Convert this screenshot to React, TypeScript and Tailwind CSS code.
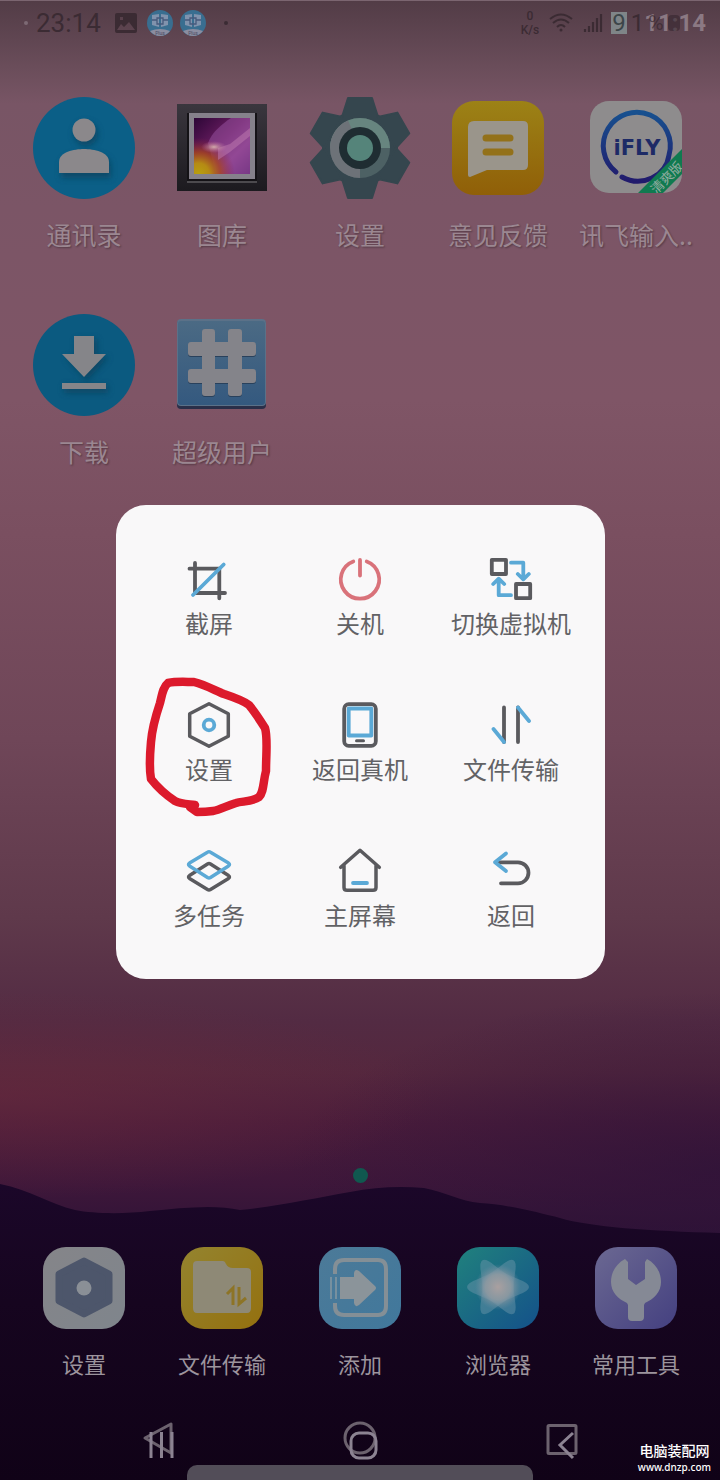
import type { ReactNode } from "react";

const INK = "#5a5a5e";
const BLUE = "#5ba9d6";

type Item = { label: string; icon: ReactNode };

const ContactsIcon = () => (
  <svg viewBox="-52 -52 104 104" className="size-[104px]" aria-hidden="true">
    <defs>
      <filter id="soft" x="-40%" y="-40%" width="180%" height="180%">
        <feGaussianBlur stdDeviation="3" />
      </filter>
    </defs>
    <circle r="51" fill="#0b5f87" />
    <g fill="#073f5a" opacity=".7" filter="url(#soft)">
      <circle cx="2" cy="-14" r="12" />
      <path d="M-23 30V18C-23 8-8 5 2 5S27 8 27 18V30Z" />
    </g>
    <circle cy="-18" r="11.5" fill="#8b888b" />
    <path d="M-25 25V14C-25 4-10 1 0 1S25 4 25 14V25Z" fill="#8b888b" />
  </svg>
);

const GalleryIcon = () => (
  <svg viewBox="-52 -52 104 104" className="size-[104px]" aria-hidden="true">
    <defs>
      <linearGradient id="frame" x1="0" y1="0" x2="0" y2="1">
        <stop offset="0" stopColor="#3a363e" />
        <stop offset="1" stopColor="#1c1a1f" />
      </linearGradient>
      <linearGradient id="photo" x1="0" y1="0" x2="1" y2="1">
        <stop offset="0" stopColor="#2c0636" />
        <stop offset=".45" stopColor="#6b1d62" />
        <stop offset=".7" stopColor="#8a3a86" />
        <stop offset="1" stopColor="#571a68" />
      </linearGradient>
      <radialGradient id="flare" cx="8%" cy="100%" r="65%">
        <stop offset="0" stopColor="#b8a00e" />
        <stop offset=".3" stopColor="#b58a14" />
        <stop offset=".6" stopColor="#a8461e" stopOpacity=".8" />
        <stop offset="1" stopColor="#8a2048" stopOpacity="0" />
      </radialGradient>
      <radialGradient id="spark">
        <stop offset="0" stopColor="#d9b7b0" stopOpacity=".9" />
        <stop offset="1" stopColor="#c070a0" stopOpacity="0" />
      </radialGradient>
    </defs>
    <rect x="-45" y="-44" width="90" height="87" fill="url(#frame)" />
    <rect x="-35" y="-35" width="70" height="68" fill="#141216" />
    <rect x="-33" y="-35" width="66" height="66" fill="#85818b" />
    <rect x="-28" y="-30" width="56" height="56" fill="url(#photo)" />
    <path d="M-14-5C-10-16 0-24 9-30H28V26H-6Z" fill="#9a55a4" opacity=".5" />
    <rect x="-28" y="-30" width="56" height="56" fill="url(#flare)" />
    <path d="M-4 0L8-4 28-20V-12L8 4-4 12Z" fill="#c07bb0" opacity=".5" />
    <ellipse cx="-8" cy="-1" rx="13" ry="6" fill="url(#spark)" />
    <path d="M-35 34H35" stroke="#5c5a5e" strokeWidth="1.5" />
  </svg>
);

const GearIcon = () => (
  <svg viewBox="-52 -52 104 104" className="size-[104px]" aria-hidden="true">
    <g fill="#35464e" stroke="#35464e" strokeWidth="2" strokeLinejoin="round">
      <circle r="37" />
      {[0, 60, 120, 180, 240, 300].map((a) => (
        <path key={a} d="M-12-50H12L18-31H-18Z" transform={`rotate(${a})`} />
      ))}
    </g>
    <circle r="30" fill="#4d6164" />
    <path d="M-30 0A30 30 0 0 1 30 0Z" fill="#67857f" />
    <path d="M-30 0A30 30 0 0 1-12-27.500L0 0V30A30 30 0 0 1-30 0Z" fill="#6d7278" />
    <circle r="21" fill="#1f2d32" />
    <circle r="13" fill="#55847a" />
  </svg>
);

const FeedbackIcon = () => (
  <svg viewBox="-52 -52 104 104" className="size-[104px]" aria-hidden="true">
    <defs>
      <linearGradient id="amber" x1="0" y1="0" x2="0" y2="1">
        <stop offset="0" stopColor="#9c8216" />
        <stop offset="1" stopColor="#905f08" />
      </linearGradient>
    </defs>
    <rect x="-46" y="-47" width="92" height="94" rx="22" fill="url(#amber)" />
    <path d="M-24-27H25Q30-27 30-22V17Q30 22 25 22H-11L-28 29Q-30 29-30 27V-21Q-30-27-24-27Z" fill="#9a958b" />
    <path d="M-12-10H12M-12 4H12" stroke="#93711a" strokeWidth="7" strokeLinecap="round" />
  </svg>
);

const IflyIcon = () => (
  <svg viewBox="-52 -52 104 104" className="size-[104px]" aria-hidden="true">
    <defs>
      <linearGradient id="ring" x1="0" y1="0" x2="0" y2="1">
        <stop offset="0" stopColor="#17508f" />
        <stop offset="1" stopColor="#211a6c" />
      </linearGradient>
      <clipPath id="tile">
        <rect x="-46" y="-47" width="92" height="92" rx="19" />
      </clipPath>
    </defs>
    <rect x="-46" y="-47" width="92" height="92" rx="19" fill="#8e8c8d" />
    <path d="M-20 24A33.500 33.500 0 1 1 33 7C30 28 6 40-14 29" fill="none" stroke="url(#ring)" strokeWidth="5" strokeLinecap="round" />
    <text x="1" y="7" textAnchor="middle" fontSize="21" fontWeight="700" fill="#1d2a66" fontFamily="'DejaVu Sans', sans-serif">
      iFLY
    </text>
    <g clipPath="url(#tile)">
      <path d="M47 0L1 46H26L47 25Z" fill="#107a50" />
      <text x="0" y="0" transform="translate(34 33) rotate(-45)" textAnchor="middle" fontSize="13" fill="#93ada1" fontFamily="'Noto Sans CJK SC', sans-serif">
        清爽版
      </text>
    </g>
  </svg>
);

const DownloadIcon = () => (
  <svg viewBox="-52 -52 104 104" className="size-[104px]" aria-hidden="true">
    <circle r="51" fill="#0b5a80" />
    <path d="M-8-26H13V-8H25L3 16-19-8H-8ZM-20 20H24V28H-20Z" fill="#073f5a" opacity=".7" filter="url(#soft)" />
    <path d="M-10-29H10V-11H22L0 12-22-11H-10ZM-22 18H22V24H-22Z" fill="#858589" />
  </svg>
);

const HashIcon = () => (
  <svg viewBox="-52 -52 104 104" className="size-[104px]" aria-hidden="true">
    <defs>
      <linearGradient id="steel" x1="0" y1="0" x2="0" y2="1">
        <stop offset="0" stopColor="#4b6a84" />
        <stop offset="1" stopColor="#34597f" />
      </linearGradient>
      <path
        id="hash"
        d="M-17-36H-10Q-7-36-7-33V-23H6V-33Q6-36 9-36H17Q20-36 20-33V-23H31Q34-23 34-20V-12Q34-9 31-9H20V4H31Q34 4 34 7V15Q34 18 31 18H20V28Q20 31 17 31H9Q6 31 6 28V18H-7V28Q-7 31-10 31H-17Q-20 31-20 28V18H-31Q-34 18-34 15V7Q-34 4-31 4H-20V-9H-31Q-34-9-34-12V-20Q-34-23-31-23H-20V-33Q-20-36-17-36ZM-7-9V4H6V-9Z"
      />
    </defs>
    <rect x="-45" y="-45" width="89" height="89" rx="4" fill="#2a2f49" />
    <rect x="-45" y="-46" width="89" height="87" rx="4" fill="#5b7188" />
    <rect x="-44" y="-44" width="87" height="84" rx="3" fill="url(#steel)" />
    <use href="#hash" y="1" fill="#29415c" />
    <use href="#hash" fill="#84848a" fillRule="evenodd" />
  </svg>
);

const DockTile = ({ id, from, to, children }: { id: string; from: string; to: string; children: ReactNode }) => (
  <svg viewBox="-41 -41 82 82" className="size-[82px]" aria-hidden="true">
    <defs>
      <linearGradient id={id} x1="0" y1="0" x2="1" y2="1">
        <stop offset="0" stopColor={from} />
        <stop offset="1" stopColor={to} />
      </linearGradient>
    </defs>
    <rect x="-41" y="-41" width="82" height="82" rx="23" fill={`url(#${id})`} />
    {children}
  </svg>
);

const homeApps: Item[] = [
  { label: "通讯录", icon: <ContactsIcon /> },
  { label: "图库", icon: <GalleryIcon /> },
  { label: "设置", icon: <GearIcon /> },
  { label: "意见反馈", icon: <FeedbackIcon /> },
  { label: "讯飞输入..", icon: <IflyIcon /> },
  { label: "下载", icon: <DownloadIcon /> },
  { label: "超级用户", icon: <HashIcon /> },
];

const dockApps: Item[] = [
  {
    label: "设置",
    icon: (
      <DockTile id="d1" from="#858589" to="#7f858c">
        <path d="M0-27L25-14V13L0 26-25 13V-14Z" fill="#4d566b" stroke="#4d566b" strokeWidth="7" strokeLinejoin="round" />
        <circle r="7.500" fill="#8a8f96" />
      </DockTile>
    ),
  },
  {
    label: "文件传输",
    icon: (
      <DockTile id="d2" from="#94842f" to="#94700f">
        <path d="M-25-27H1Q3-27 4-24 6-20 11-20H25Q29-20 29-16V20Q29 25 25 25H-25Q-29 25-29 20V-23Q-29-27-25-27Z" fill="#8e8976" />
        <path d="M5 6L11 0V17M17-1V16L24 10" fill="none" stroke="#8d7426" strokeWidth="3" />
      </DockTile>
    ),
  },
  {
    label: "添加",
    icon: (
      <DockTile id="d3" from="#4c7a98" to="#41789c">
        <path d="M-25-14V-19Q-25-28-16-28H18Q26-28 26-19V18Q26 27 18 27H-16Q-25 27-25 18V15" fill="none" stroke="#848f96" strokeWidth="4" />
        <path d="M-20-11H-6V-15Q-5-20-1-17L15-2Q17 0 15 2L-1 17Q-5 20-6 15V11H-20Z" fill="#8b949a" />
        <path d="M-29-11V11M-24-11V11" stroke="#77909f" strokeWidth="2" />
      </DockTile>
    ),
  },
  {
    label: "浏览器",
    icon: (
      <DockTile id="d4" from="#20817d" to="#14518a">
        <defs>
          <radialGradient id="glow">
            <stop offset="0" stopColor="#aaa0a0" />
            <stop offset=".55" stopColor="#949aa0" stopOpacity=".8" />
            <stop offset="1" stopColor="#6f8ca0" stopOpacity="0" />
          </radialGradient>
        </defs>
        {[0, 60, 120, 180, 240, 300].map((a) => (
          <path key={a} d="M-17 0L-8-20Q0-42 8-20L17 0Z" transform={`translate(0 -1) rotate(${a + 30})`} fill="#6793a8" opacity=".5" />
        ))}
        <circle cy="-1" r="23" fill="url(#glow)" />
      </DockTile>
    ),
  },
  {
    label: "常用工具",
    icon: (
      <DockTile id="d5" from="#6b6892" to="#444080">
        <path d="M-11-29L-8-26V-9L0-3 9-9V-26L11-29C20-24 25-16 25-6 25 4 18 11 9 15L8 17V29Q8 33 4 33H-4Q-8 33-8 29V17L-9 15C-18 11-25 4-25-6-25-16-20-24-11-29Z" fill="#858995" />
      </DockTile>
    ),
  },
];

const Glyph = ({ children }: { children: ReactNode }) => (
  <svg viewBox="0 0 48 48" className="size-12" fill="none" stroke={INK} strokeWidth="3.800" strokeLinecap="round" strokeLinejoin="round" aria-hidden="true">
    {children}
  </svg>
);

const actions: Item[] = [
  {
    label: "截屏",
    icon: (
      <Glyph>
        <path d="M4.500 13.700H34.300V43.300M10 8V38H40" />
        <path d="M8 40L38.700 9.500" stroke={BLUE} />
      </Glyph>
    ),
  },
  {
    label: "关机",
    icon: (
      <Glyph>
        <g stroke="#d9727a">
          <path d="M17.300 6.500A19.200 19.200 0 1 0 30.700 6.500M24 5V20.500" />
        </g>
      </Glyph>
    ),
  },
  {
    label: "切换虚拟机",
    icon: (
      <Glyph>
        <path d="M4.800 4.800H19V19H4.800ZM29 29H43.200V43.200H29Z" />
        <path d="M24 7.700H36.300V24M30.800 19L36.300 24.300 41.800 19M24 40.200H11.700V24M6.200 29L11.700 23.700 17.200 29" stroke={BLUE} />
      </Glyph>
    ),
  },
  {
    label: "设置",
    icon: (
      <Glyph>
        <path d="M24 2.800L43.300 12.800V35.200L24 45.200 4.700 35.200V12.800Z" strokeWidth="3.500" />
        <circle cx="24" cy="24" r="5.300" stroke={BLUE} />
      </Glyph>
    ),
  },
  {
    label: "返回真机",
    icon: (
      <Glyph>
        <rect x="8.200" y="3.200" width="31.600" height="41.600" rx="4.500" />
        <path d="M12.700 7.500H35.300V34.500H12.700Z" stroke={BLUE} />
        <path d="M20.500 39.700H27.500" strokeWidth="3" />
      </Glyph>
    ),
  },
  {
    label: "文件传输",
    icon: (
      <Glyph>
        <path d="M17 6.500V41M31 41V6.500" />
        <path d="M17 41L6.500 28M31 6.500L42 20" stroke={BLUE} />
      </Glyph>
    ),
  },
  {
    label: "多任务",
    icon: (
      <Glyph>
        <path d="M22.500 17L4.500 28.500Q2.500 30 4.500 31.500L22.500 42.500Q24 43.500 25.500 42.500L43.500 31.500Q45.500 30 43.500 28.500L25.500 17Q24 16 22.500 17Z" strokeWidth="3.400" />
        <path d="M22.500 5.200L4.500 16Q2.500 17.500 4.500 19L22.500 30.500Q24 31.500 25.500 30.500L43.500 19Q45.500 17.500 43.500 16L25.500 5.200Q24 4.200 22.500 5.200Z" stroke={BLUE} strokeWidth="3.400" />
      </Glyph>
    ),
  },
  {
    label: "主屏幕",
    icon: (
      <Glyph>
        <path d="M4.700 20.300L24 3.300 43.300 20.300M8 18V40.500Q8 43.300 11 43.300H37Q40 43.300 40 40.500V18" strokeWidth="3.500" />
        <path d="M17 36H31" stroke={BLUE} />
      </Glyph>
    ),
  },
  {
    label: "返回",
    icon: (
      <Glyph>
        <path d="M10 15.300H31A10.500 10.500 0 0 1 31 36.300H14" />
        <path d="M19 6.500L8 15.300 19 24" stroke={BLUE} />
      </Glyph>
    ),
  },
];

const PlusBadge = () => (
  <svg viewBox="0 0 26 26" className="size-[26px]" aria-hidden="true">
    <circle cx="13" cy="13" r="13" fill="#396e90" />
    <path d="M3 21Q13 17 23 21Q19 26 13 26T3 21Z" fill="#8b8da0" />
    <path d="M5 5L12 4V17L5 15ZM14 4L21 5V15L14 17Z" fill="#8093ad" />
    <path d="M10 8H16V14H10ZM5 10H10M16 10H21" fill="none" stroke="#465a7c" strokeWidth="1.300" />
    <text x="13" y="25" textAnchor="middle" fontSize="5" fill="#4a4a63" fontFamily="Roboto, sans-serif">
      Plus
    </text>
  </svg>
);

function StatusBar() {
  return (
    <header className="flex h-11 items-center border-t border-[#7b6570] pr-[14px] pl-6 font-[Roboto,sans-serif] text-[#3b2b33]">
      <span className="size-1 rounded-full bg-[#7d6a74]" />
      <span className="ml-2 text-[26px] leading-8">23:14</span>
      <svg viewBox="0 0 22 20" className="ml-[14px] h-5 w-[22px]" aria-hidden="true">
        <path fill="#3b2b33" fillRule="evenodd" d="M2 0H20Q22 0 22 2V18Q22 20 20 20H2Q0 20 0 18V2Q0 0 2 0ZM2 17H20L14 9 9 14 6 11ZM5 4V7H8V4Z" />
      </svg>
      <span className="ml-[10px] flex gap-[7px]">
        <PlusBadge />
        <PlusBadge />
      </span>
      <span className="ml-[18px] size-1 rounded-full bg-[#3a2b33]" />
      <span className="ml-auto flex flex-col items-center text-[12px] leading-[14px] font-medium">
        <span>0</span>
        <span>K/s</span>
      </span>
      <svg viewBox="0 0 24 20" className="ml-[10px] h-5 w-6" fill="none" stroke="#3b2b33" strokeWidth="2" aria-hidden="true">
        <path d="M1 6Q12-3 23 6M4 10Q12 3 20 10M8 14Q12 10 16 14" />
        <circle cx="12" cy="17" r="1.500" fill="#3b2b33" stroke="none" />
      </svg>
      <svg viewBox="0 0 20 20" className="ml-[10px] size-5" stroke="#3b2b33" strokeWidth="2.200" aria-hidden="true">
        <path d="M2 19V16M6 19V13M10 19V9M14 19V5M18 19V1" />
      </svg>
      <span className="ml-[8px] bg-[#7f8588] px-px text-[24px] leading-[22px] text-[#3c4549]">9</span>
      <span className="ml-1 text-[24px] leading-6">1</span>
      <span className="relative text-[24px] leading-8 font-bold text-[#8b7983]">
        11:14
        <span className="absolute top-0 left-1 text-[21px] leading-8 font-normal text-[#36272f]/70">%</span>
        <span className="absolute top-2 left-6 h-4 w-3 rounded-sm bg-[#36272f]/60" />
      </span>
    </header>
  );
}

function NavBar() {
  return (
    <nav className="grid grid-cols-3 px-[59px]" aria-label="导航">
      <button type="button" aria-label="返回" className="flex justify-center">
        <svg viewBox="0 0 40 44" className="h-11 w-10" fill="none" strokeLinejoin="round" aria-hidden="true">
          <path d="M6 20L32 6V35Z" stroke="#6c626e" strokeWidth="3" />
          <path d="M12 14V40M22.500 14V40M33 14V40" stroke="#8c8392" strokeWidth="3" />
        </svg>
      </button>
      <button type="button" aria-label="主屏幕" className="flex justify-center">
        <svg viewBox="0 0 40 44" className="h-11 w-10" fill="none" aria-hidden="true">
          <circle cx="20" cy="20" r="15" stroke="#6c626e" strokeWidth="3" />
          <rect x="11" y="15" width="25" height="25" rx="8" stroke="#8c8392" strokeWidth="3" />
        </svg>
      </button>
      <button type="button" aria-label="最近任务" className="flex justify-center">
        <svg viewBox="0 0 40 44" className="h-11 w-10" fill="none" aria-hidden="true">
          <rect x="7" y="7.500" width="28" height="28" rx="1" stroke="#6c626e" strokeWidth="3" />
          <path d="M32 15L19 27 32 40" stroke="#8c8392" strokeWidth="3" />
        </svg>
      </button>
    </nav>
  );
}

function ActionMenu() {
  return (
    <div role="dialog" aria-label="快捷菜单" className="mx-[115px] grid w-full max-w-[489px] grid-cols-3 gap-y-[58px] rounded-[30px] bg-[#f9f8f9] px-[18px] pt-[50px] pb-[44px]">
      {actions.map((a, i) => (
        <button type="button" key={a.label} className="relative flex flex-col items-center gap-1 whitespace-nowrap">
          {a.icon}
          <span className="pb-1 text-[24px] leading-8 text-[#626265]">{a.label}</span>
          {i === 3 && (
            <svg viewBox="139 673 140 148" className="absolute -top-7 left-1/2 h-[148px] w-[140px] -translate-x-1/2" fill="none" stroke="#dc1a2c" strokeWidth="8.500" strokeLinecap="round" strokeLinejoin="round" aria-hidden="true">
              <path d="M168 683C177 681 186 682 194 682C206 685 216 691 224 694C233 697 244 701 249 705C254 711 260 720 265 728C268 738 266 754 266 771C263 782 264 792 259 797C252 802 242 801 236 803C226 806 220 810 213 811C206 812 200 812 197 812L190 807L195 805C188 804 181 804 175 801C166 795 158 788 151 779C149 768 150 753 151 742C152 729 156 715 160 703C162 695 163 687 168 683Z" />
            </svg>
          )}
        </button>
      ))}
    </div>
  );
}

export default function App() {
  return (
    <div className="relative isolate flex min-h-screen flex-col bg-[radial-gradient(ellipse_60%_7%_at_0%_74%,#6a2a3c90,#6a2a3c00),radial-gradient(ellipse_60%_12%_at_100%_79%,#2c1238b0,#2c123800),linear-gradient(180deg,#523c46_0%,#604652_2.700%,#6a4d5a_4.500%,#785565_7%,#7b5566_14%,#7f5566_27%,#7a4f60_36%,#6f4658_50%,#5f394b_62%,#532b43_69%,#54273e_72.500%,#4a1c3b_76%,#3e173a_80%,#2d1236_84%)] font-['Noto_Sans_CJK_SC',sans-serif]">
      <svg viewBox="0 0 720 300" preserveAspectRatio="none" className="absolute inset-x-0 bottom-0 -z-10 h-[300px] w-full" aria-hidden="true">
        <defs>
          <linearGradient id="hill" x1="0" y1="0" x2="0" y2="1">
            <stop offset="0" stopColor="#1b0729" />
            <stop offset=".4" stopColor="#16051f" />
            <stop offset="1" stopColor="#100217" />
          </linearGradient>
        </defs>
        <path d="M0 4C30 10 50 24 75 30C95 34 125 34 150 31C180 28 215 24 240 30C280 26 315 18 350 12C375 7 400 6 424 8C445 12 460 21 480 23C505 24 540 33 560 38C590 47 650 51 720 53V300H0Z" fill="url(#hill)" />
      </svg>

      <StatusBar />

      <main className="grid grid-cols-5 gap-y-[59px] px-[15px] pt-[52px]">
        {homeApps.map((a) => (
          <button type="button" key={a.label} className="flex flex-col items-center gap-[18px] whitespace-nowrap">
            {a.icon}
            <span className="pb-1 text-[25px] leading-8 text-[#9b8791] [text-shadow:1px_1px_2px_#0005]">{a.label}</span>
          </button>
        ))}
      </main>

      <footer className="mt-auto">
        <div className="mx-auto size-[15px] rounded-full bg-[#10584f]" />
        <div className="mt-16 grid grid-cols-5 px-[15px]">
          {dockApps.map((a) => (
            <button type="button" key={a.label} className="flex flex-col items-center gap-[18px] whitespace-nowrap">
              {a.icon}
              <span className="text-[22px] leading-8 text-[#9c949d]">{a.label}</span>
            </button>
          ))}
        </div>
        <div className="mt-[39px]">
          <NavBar />
        </div>
        <div className="mx-[187px] mt-[3px] h-[15px] rounded-t-[10px] bg-[#524d58]" />
      </footer>

      <div className="absolute right-[9px] bottom-[6px] text-center text-white">
        <p className="text-[14px] leading-5 font-medium">电脑装配网</p>
        <p className="font-['Noto_Sans',sans-serif] text-[10px] leading-[14px] font-medium">www.dnzp.com</p>
      </div>

      <div className="fixed inset-0 flex items-center justify-center pt-1">
        <ActionMenu />
      </div>
    </div>
  );
}
